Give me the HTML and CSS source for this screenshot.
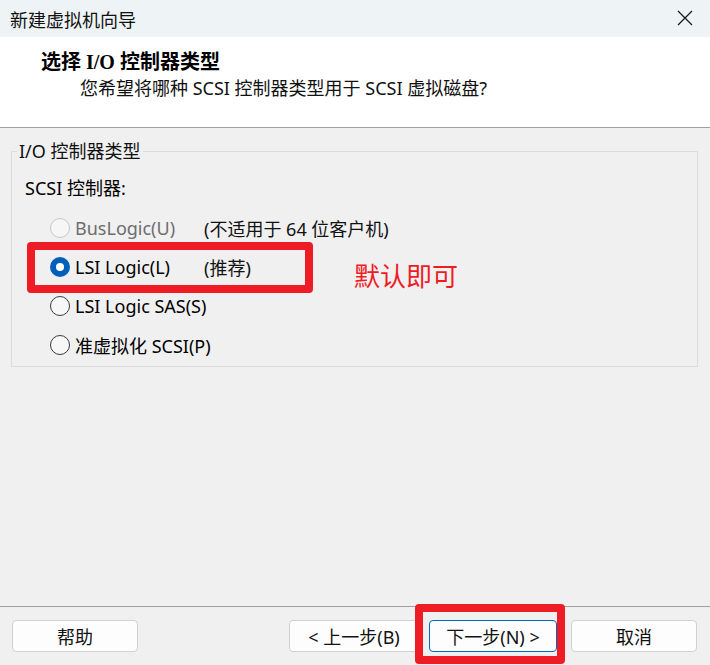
FILE: index.html
```html
<!DOCTYPE html>
<html lang="zh-CN">
<head>
<meta charset="utf-8">
<title>新建虚拟机向导</title>
<link rel="stylesheet" href="styles.css">
</head>
<body>
<div class="window">
  <div class="titlebar">
    <span class="title">新建虚拟机向导</span>
    <svg class="close" width="16" height="16" viewBox="0 0 16 16"><path d="M1 1 L15 15 M15 1 L1 15" stroke="#1a1a1a" stroke-width="1.3" fill="none"/></svg>
  </div>
  <div class="header">
    <div class="heading">选择 I/O 控制器类型</div>
    <div class="subtitle">您希望将哪种 SCSI 控制器类型用于 SCSI 虚拟磁盘?</div>
  </div>
  <div class="main">
    <fieldset class="group">
      <legend>I/O 控制器类型</legend>
      <div class="label">SCSI 控制器:</div>
      <div class="options">
        <div class="opt disabled"><span class="radio"></span><span>BusLogic(U)</span></div>
        <div class="note">(不适用于 64 位客户机)</div>
        <div class="opt"><span class="radio checked"></span><span>LSI Logic(L)</span></div>
        <div class="note">(推荐)</div>
        <div class="opt wide"><span class="radio"></span><span>LSI Logic SAS(S)</span></div>
        <div class="opt wide"><span class="radio"></span><span>准虚拟化 SCSI(P)</span></div>
      </div>
    </fieldset>
    <div class="mark mark-row"></div>
    <div class="annot">默认即可</div>
  </div>
  <div class="footer">
    <button class="btn btn-help">帮助</button>
    <div class="nav">
      <button class="btn btn-back">&lt; 上一步(B)</button>
      <button class="btn btn-next">下一步(N) &gt;</button>
      <button class="btn btn-cancel">取消</button>
    </div>
    <div class="mark mark-next"></div>
  </div>
</div>
</body>
</html>
```

FILE: styles.css
```css
html, body {
  margin: 0;
  padding: 0;
  background: #f0f0f0;
}
body {
  font-family: "Noto Sans", "Noto Sans CJK SC", sans-serif;
  font-size: 18px;
  color: #000;
}
.window {
  width: 710px;
  height: 665px;
  display: flex;
  flex-direction: column;
  background: #f0f0f0;
  overflow: hidden;
}
.titlebar {
  height: 37px;
  flex: none;
  background: #eef3f6;
  display: flex;
  align-items: center;
  justify-content: space-between;
  padding: 0 17px 0 10px;
}
.title {
  font-size: 18px;
  color: #111;
}
.close { display: block; margin-top: -2px; }
.header {
  flex: none;
  background: #fff;
  border-bottom: 1px solid #a0a0a0;
  box-sizing: border-box;
  height: 91px;
  padding: 12px 0 0 41px;
}
.heading {
  font-weight: bold;
  font-size: 20px;
  line-height: 26px;
  font-family: "Liberation Serif", "Noto Sans CJK SC", serif;
}
.subtitle {
  margin-top: 1px;
  padding-left: 39px;
  line-height: 24px;
  color: #111;
}
.main {
  flex: 1;
  position: relative;
  padding: 11px 12px 0 11px;
}
.group {
  margin: 0;
  border: 1px solid #dcdcdc;
  padding: 0 0 12px 13px;
  height: 228px;
  box-sizing: border-box;
}
.group legend {
  padding: 0 2px;
  margin-left: -8px;
  line-height: 24px;
  color: #111;
}
.label {
  margin-top: 13px;
  line-height: 24px;
}
.options {
  display: grid;
  grid-template-columns: 154px auto;
  grid-auto-rows: 39px;
  align-items: center;
  margin-top: 8px;
  margin-left: 25px;
}
.opt {
  display: flex;
  align-items: center;
  gap: 5px;
  white-space: nowrap;
}
.opt.wide { grid-column: 1 / -1; }
.opt.disabled { color: #6d6d6d; }
.note { color: #111; white-space: nowrap; }
.radio {
  width: 20px;
  height: 20px;
  box-sizing: border-box;
  border-radius: 50%;
  border: 1px solid #3a3a3a;
  background: #f7f7f7;
  flex: none;
  position: relative;
}
.disabled .radio {
  border-color: #c8c8c8;
  background: #f6f6f6;
}
.radio.checked {
  border: none;
  background: #005fb8;
}
.radio.checked::after {
  content: "";
  position: absolute;
  left: 6px;
  top: 6px;
  width: 8px;
  height: 8px;
  border-radius: 50%;
  background: #fff;
}
.mark {
  position: absolute;
  border: 8px solid #ee1c25;
  border-radius: 4px;
  box-sizing: border-box;
}
.mark-row {
  left: 27px;
  top: 114px;
  width: 286px;
  height: 51px;
}
.annot {
  position: absolute;
  left: 354px;
  top: 129px;
  font-family: "Noto Sans CJK SC", sans-serif;
  font-size: 26px;
  line-height: 36px;
  color: #ee1c25;
}
.footer {
  flex: none;
  height: 59px;
  box-sizing: border-box;
  border-top: 1px solid #a0a0a0;
  position: relative;
  display: flex;
  align-items: flex-start;
  justify-content: space-between;
  padding: 13px 13px 0 12px;
}
.nav {
  display: flex;
  gap: 10px;
}
.btn {
  height: 32px;
  box-sizing: border-box;
  border: 1px solid #d0d0d0;
  border-radius: 4px;
  background: #fdfdfd;
  font-family: "Noto Sans", "Noto Sans CJK SC", sans-serif;
  font-size: 18px;
  color: #111;
  padding: 0;
}
.btn-help { width: 126px; }
.btn-back { width: 130px; }
.btn-next { width: 128px; border-color: #0067c0; }
.btn-cancel { width: 126px; margin-left: 4px; }
.mark-next {
  left: 415px;
  top: -3px;
  width: 150px;
  height: 60px;
}
```
